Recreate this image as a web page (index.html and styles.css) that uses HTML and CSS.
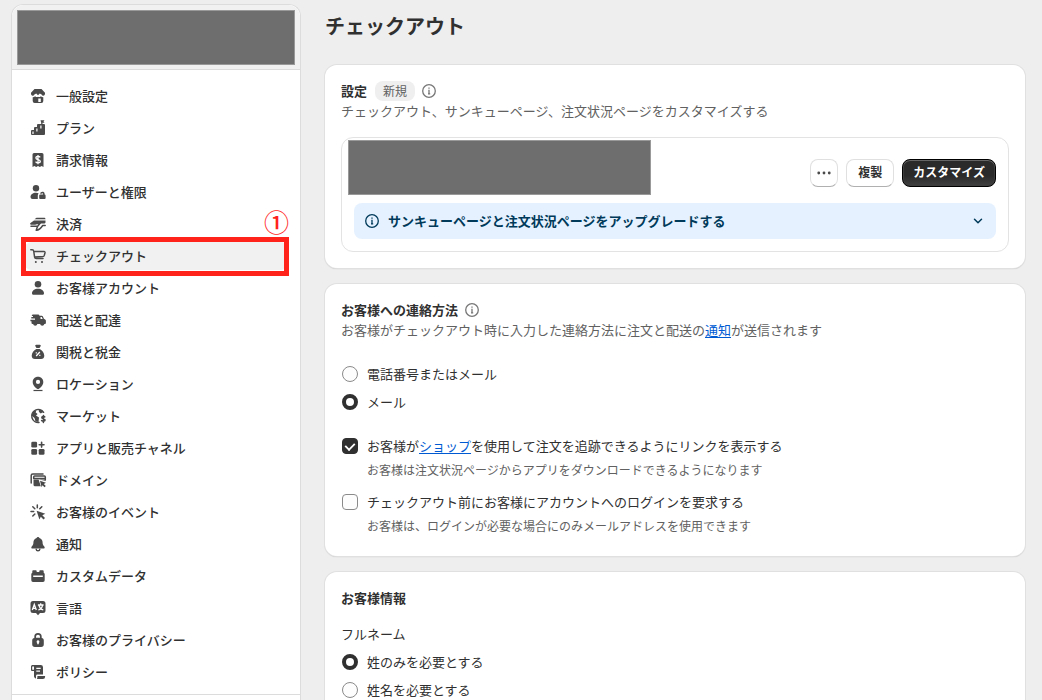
FILE: index.html
```html
<!DOCTYPE html>
<html lang="ja">
<head>
<meta charset="utf-8">
<meta name="viewport" content="width=device-width, initial-scale=1">
<title>チェックアウト</title>
<link rel="stylesheet" href="styles.css">
</head>
<body>
<div class="app">
  <aside class="sidebar">
    <div class="sidebar-head"><div class="redacted store-name"></div></div>
    <nav class="nav" aria-label="設定">
      <a class="nav-item" href="#general"><svg class="icon" viewBox="0 0 20 20"><path d="M6.500 3h7L17 6.800c.3 1.600-.5 2.900-1.700 2.900-.8 0-1.400-.4-1.700-1.200L11.800 7.500 10 9.200 8.200 7.500 6.400 8.500C6.100 9.300 5.500 9.700 4.700 9.700 3.500 9.700 2.700 8.400 3 6.800z"/><path fill-rule="evenodd" d="M4.700 11.200c1 0 1.800-.4 2.400-1 .9.900 2 1.100 2.900.6.900.5 2 .3 2.900-.6.6.6 1.400 1 2.400 1V15a2 2 0 0 1-2 2H6.700a2 2 0 0 1-2-2zM10.300 12.500V16h2.500v-3.500z"/></svg><span>一般設定</span></a>
      <a class="nav-item" href="#plan"><svg class="icon" viewBox="0 0 20 20"><path d="M12.500 2.200h4l-1 1.300 1 1.200h-2V6H16a1 1 0 0 1 1 1v9a1 1 0 0 1-1 1H4a1 1 0 0 1-1-1v-3a1 1 0 0 1 1-1h2v-2a1 1 0 0 1 1-1h2V7a1 1 0 0 1 1-1h3.200V4.700z"/><path class="cut" d="M12.300 7.500h1.200v3h-1.200zM8.300 10.500h1.200v3H8.300zM4.400 13.500h1.200V16H4.400z"/></svg><span>プラン</span></a>
      <a class="nav-item" href="#billing"><svg class="icon" viewBox="0 0 20 20"><path d="M6 3h8a1.500 1.500 0 0 1 1.500 1.500V17l-1.900-1-1.800 1-1.800-1-1.800 1-1.800-1-1.900 1V4.500A1.500 1.500 0 0 1 6 3z"/><path class="cut-line" d="M12.200 7.300c-.5-.8-1.200-1-2.200-1-1.300 0-2.100.6-2.100 1.600 0 2.300 4.400 1 4.400 3.300 0 1-.9 1.600-2.300 1.600-1.100 0-1.900-.4-2.400-1.200M10 5v9.300"/></svg><span>請求情報</span></a>
      <a class="nav-item" href="#users"><svg class="icon" viewBox="0 0 20 20"><circle cx="8" cy="6.300" r="3.200"/><path d="M2.500 15c0-2.500 2.300-4.300 5.500-4.300 1 0 1.900.2 2.700.5-.7.800-.9 1.600-.9 2.800V17H4.500a2 2 0 0 1-2-2z"/><path fill-rule="evenodd" d="M11.200 13.500a1 1 0 0 1 1-1h2.900v-.7c0-.8-1.400-.8-1.600 0h-1.300c0-2.500 4.400-2.700 4.400 0v.8c.7.1 1 .5 1 1.100V16a1 1 0 0 1-1 1h-4.400a1 1 0 0 1-1-1z"/></svg><span>ユーザーと権限</span></a>
      <a class="nav-item" href="#payments"><svg class="icon" viewBox="0 0 20 20"><path d="M8.500 3.800h7.700c.8 0 1.300.6 1.300 1.400H6.500zM6 6.600h11.500v1.700c0 .6-.5 1-1 1.100H9.300L7 10.500H2.500V8.900z"/><path class="line" d="M3 9.700h3.500c2 0 3-.6 5.800-.6l-2.600 3.100H3M9.500 12.500l-1.300 3.700c2.500.2 4.500-1.700 6.500-4.700h2.500"/></svg><span>決済</span></a>
      <a class="nav-item selected" href="#checkout" aria-current="page"><svg class="icon" viewBox="0 0 20 20"><path class="line" d="M2.800 3.700h1.400c.8 0 1.400.5 1.500 1.300l.9 6.200c.1.800.7 1.400 1.600 1.400h6.800M5.900 5.500h10.200c.6 0 1 .6.900 1.200l-.7 2.700c-.2.700-.7 1.100-1.400 1.200l-8.300.5"/><circle cx="7.800" cy="16" r="1"/><circle cx="14" cy="16" r="1"/></svg><span>チェックアウト</span></a>
      <a class="nav-item" href="#accounts"><svg class="icon" viewBox="0 0 20 20"><circle cx="10" cy="6.300" r="3.300"/><path d="M4 15.200c0-2.600 2.600-4.500 6-4.500s6 1.900 6 4.500c0 1-.8 1.600-1.700 1.600H5.700c-.9 0-1.700-.6-1.700-1.600z"/></svg><span>お客様アカウント</span></a>
      <a class="nav-item" href="#shipping"><svg class="icon" viewBox="0 0 20 20"><path fill-rule="evenodd" d="M4.500 4.500H10a1.500 1.500 0 0 1 1.500 1.300h2.200c.6 0 1 .3 1.200.8l1 2.100 1.200.7c.5.300.8.700.8 1.300v2.300a1 1 0 0 1-1 1h-.5a2.200 2.200 0 0 1-4.300 0H9.400a2.200 2.200 0 0 1-4.300 0H4.500a1 1 0 0 1-1-1V11.200H2.400V9.700H7V8.500H3.300V7H5V6H3.600zM12.500 7v2h2.200l-.9-2z"/></svg><span>配送と配達</span></a>
      <a class="nav-item" href="#taxes"><svg class="icon" viewBox="0 0 20 20"><path d="M8.200 2.800h3.600c.9 0 1.200.8.800 1.500L11.500 6h-3L7.400 4.300C7 3.600 7.300 2.800 8.200 2.800zM8.300 7.100h3.400C14.200 8.500 16.300 11 16.300 13.700c0 2-1.300 3.300-3.200 3.300H6.900c-1.900 0-3.200-1.300-3.200-3.300C3.700 11 5.800 8.500 8.300 7.100z"/><path class="cut-line" d="m8.200 14 3.600-4M7.700 10.800h1.200M11.200 13.300h1.200"/></svg><span>関税と税金</span></a>
      <a class="nav-item" href="#locations"><svg class="icon" viewBox="0 0 20 20"><path fill-rule="evenodd" d="M10 2.700c3 0 5.300 2.200 5.300 5.200 0 3.200-2.800 5.600-4.300 6.800-.6.500-1.400.5-2 0-1.500-1.200-4.300-3.600-4.300-6.800 0-3 2.300-5.200 5.300-5.200zM10 5.800a2.100 2.100 0 1 0 0 4.200 2.100 2.100 0 0 0 0-4.200z"/><path d="M5.500 15.900h9v1.200h-9z"/></svg><span>ロケーション</span></a>
      <a class="nav-item" href="#markets"><svg class="icon" viewBox="0 0 20 20"><path class="line" d="M15.600 6.300A6.500 6.500 0 1 0 11 16.400"/><path d="M5 5.500 8.300 4.500 7.700 6.500 9.600 8 8 9.500l3 2-.5 4.500-3-.5-1-3.500-3-2.500zM10.500 3.500c2 .1 3.600 1 4.700 2.600L12.800 7.500 11 6z"/><path class="line" d="M16.800 11c-.6-.9-3-.9-3 .4 0 1.600 3.300 1 3.300 2.700 0 1.400-2.600 1.500-3.500.4M15.400 9.400v7"/></svg><span>マーケット</span></a>
      <a class="nav-item" href="#apps"><svg class="icon" viewBox="0 0 20 20"><rect x="3.300" y="3.700" width="5.800" height="5.800" rx="1.300"/><rect x="3.300" y="11" width="5.800" height="5.800" rx="1.300"/><rect x="10.700" y="11" width="5.800" height="5.800" rx="1.300"/><path class="line thick" d="M13.600 4.300v4.800M11.200 6.700H16"/></svg><span>アプリと販売チャネル</span></a>
      <a class="nav-item" href="#domains"><svg class="icon" viewBox="0 0 20 20"><path class="line" d="M3.200 13V5.600c0-1 .6-1.700 1.600-1.700H15"/><path class="line" d="M17.300 10V7c0-.5-.4-.9-.9-.9H6.600c-.5 0-.9.4-.9.900v1.500h11"/><path d="M5.500 9.500h11.800v1.300L10.600 9.400l2.200 6.900H7a1.500 1.500 0 0 1-1.500-1.500z"/><path d="m12 10.700 6 2-2.200 1.200 2 2-1.300 1.300-2-2-.9 2z"/></svg><span>ドメイン</span></a>
      <a class="nav-item" href="#events"><svg class="icon" viewBox="0 0 20 20"><path d="m8.600 8.700 8.700 3-3 1.500 2.700 2.700-1.500 1.500-2.700-2.700-1.400 2.900z"/><path class="line" d="M9.300 3v2.700M4.800 4.800l2 2M3 9.500h2.700M4.800 14l2-2M13.800 4.800l-2 2"/></svg><span>お客様のイベント</span></a>
      <a class="nav-item" href="#notifications"><svg class="icon" viewBox="0 0 20 20"><path d="M10 3a1.400 1.400 0 0 1 1.400 1.100A4.700 4.700 0 0 1 14.600 8.500c0 2.200.7 2.800 1.700 3.900.8.900.3 2.100-.8 2.100h-11c-1.100 0-1.600-1.200-.8-2.100 1-1.100 1.700-1.700 1.700-3.900a4.700 4.700 0 0 1 3.200-4.400A1.400 1.400 0 0 1 10 3z"/><path class="line" d="M8.200 15.200c.2 2.200 3.400 2.200 3.600 0"/></svg><span>通知</span></a>
      <a class="nav-item" href="#custom"><svg class="icon" viewBox="0 0 20 20"><path fill-rule="evenodd" d="M5.500 4.300h2c.8 0 1.200.5 1.200 1.200V6h2.600v-.5c0-.7.4-1.200 1.200-1.200h2c.8 0 1.200.5 1.200 1.200v1.300l1 1v6.500a1.700 1.700 0 0 1-1.700 1.700H5a1.700 1.700 0 0 1-1.700-1.700V7.800l1-1V5.500c0-.7.4-1.200 1.200-1.200zM5.200 9.500v1.600h9.600V9.500z"/></svg><span>カスタムデータ</span></a>
      <a class="nav-item" href="#languages"><svg class="icon" viewBox="0 0 20 20"><path d="M5 3h10a2.500 2.500 0 0 1 2.500 2.500v7A2.500 2.500 0 0 1 15 15h-3l-2 2.300L8 15H5a2.500 2.500 0 0 1-2.500-2.500v-7A2.500 2.500 0 0 1 5 3z"/><path class="cut-line" d="m4.300 12 2-5.500 2 5.500M5 10.300h2.700M12.700 5.300v1.500M9.900 7h5.700M11 7.300c.5 2.400 2 4 4.300 4.700M14.500 7.300c-.4 2.400-1.900 4-4.200 4.700"/></svg><span>言語</span></a>
      <a class="nav-item" href="#privacy"><svg class="icon" viewBox="0 0 20 20"><path fill-rule="evenodd" d="M6.300 8V6.700a3.700 3.700 0 0 1 7.400 0V8c1.300.3 2.100 1.200 2.100 2.500v3.800a2.700 2.700 0 0 1-2.700 2.700H6.900a2.700 2.700 0 0 1-2.700-2.700v-3.800C4.200 9.200 5 8.300 6.300 8zm1.700-.2h4V6.700a2 2 0 0 0-4 0zM10 10.300a1.500 1.500 0 0 0-.8 2.700v1.300h1.600V13a1.500 1.500 0 0 0-.8-2.700z"/></svg><span>お客様のプライバシー</span></a>
      <a class="nav-item" href="#policy"><svg class="icon" viewBox="0 0 20 20"><path fill-rule="evenodd" d="M4.700 3h8.100A2.200 2.200 0 0 1 15 5.200v7.300H9.500c-1 0-1.500.7-1.500 1.600v2.400c-1.300-.3-2-1.200-2-2.500V9H4a1 1 0 0 1-1-1V4.700C3 3.600 3.700 3 4.700 3zM4.200 5v2.700H6V5c0-1.100-1.800-1.100-1.800 0zM8.300 5.700V7h4.400V5.700zm0 2.700v1.300H12V8.400z"/><path d="M9.400 13.900h7.700v.9a2.200 2.200 0 0 1-2.200 2.200H8.900c.4-.6.500-1.400.5-2.100z"/></svg><span>ポリシー</span></a>
    </nav>
    <div class="callout" aria-hidden="true"><span class="callout-number">①</span></div>
  </aside>

  <main class="main">
    <h1 class="page-title">チェックアウト</h1>

    <section class="card">
      <div class="heading-row">
        <h2 class="card-title">設定</h2>
        <span class="badge">新規</span>
        <svg class="info" viewBox="0 0 16 16"><circle cx="8" cy="8" r="6.300"/><path d="M7.300 7.300H8v3.500M7 10.900h2.200M8 4.400v1.300"/></svg>
      </div>
      <p class="desc">チェックアウト、サンキューページ、注文状況ページをカスタマイズする</p>
      <div class="config">
        <div class="config-top">
          <div class="redacted config-name"></div>
          <div class="actions">
            <button class="btn btn-more" type="button" aria-label="その他の操作"><svg viewBox="0 0 16 16"><circle cx="2" cy="8" r="1.600"/><circle cx="8" cy="8" r="1.600"/><circle cx="14" cy="8" r="1.600"/></svg></button>
            <button class="btn" type="button">複製</button>
            <button class="btn btn-primary" type="button">カスタマイズ</button>
          </div>
        </div>
        <button class="banner" type="button" aria-expanded="false">
          <svg class="info" viewBox="0 0 16 16"><circle cx="8" cy="8" r="6.300"/><path d="M7.300 7.300H8v3.500M7 10.900h2.200M8 4.400v1.300"/></svg>
          <span class="banner-text">サンキューページと注文状況ページをアップグレードする</span>
          <svg class="chevron" viewBox="0 0 12 12"><path d="m2.500 4.300 3.500 3.500 3.500-3.500"/></svg>
        </button>
      </div>
    </section>

    <section class="card">
      <div class="heading-row">
        <h2 class="card-title">お客様への連絡方法</h2>
        <svg class="info" viewBox="0 0 16 16"><circle cx="8" cy="8" r="6.300"/><path d="M7.300 7.300H8v3.500M7 10.900h2.200M8 4.400v1.300"/></svg>
      </div>
      <p class="desc">お客様がチェックアウト時に入力した連絡方法に注文と配送の<a class="link" href="#notifications">通知</a>が送信されます</p>
      <div class="group contact">
        <div class="choice"><input type="radio" name="contact" id="c1"><label for="c1">電話番号またはメール</label></div>
        <div class="choice"><input type="radio" name="contact" id="c2" checked><label for="c2">メール</label></div>
      </div>
      <div class="checks">
        <div>
          <div class="choice"><input type="checkbox" id="k1" checked aria-describedby="h1"><label for="k1">お客様が<a class="link" href="#shop">ショップ</a>を使用して注文を追跡できるようにリンクを表示する</label></div>
          <p class="help" id="h1">お客様は注文状況ページからアプリをダウンロードできるようになります</p>
        </div>
        <div>
          <div class="choice"><input type="checkbox" id="k2" aria-describedby="h2"><label for="k2">チェックアウト前にお客様にアカウントへのログインを要求する</label></div>
          <p class="help" id="h2">お客様は、ログインが必要な場合にのみメールアドレスを使用できます</p>
        </div>
      </div>
    </section>

    <section class="card">
      <h2 class="card-title">お客様情報</h2>
      <fieldset class="group names">
        <legend>フルネーム</legend>
        <div class="choice"><input type="radio" name="fullname" id="n1" checked><label for="n1">姓のみを必要とする</label></div>
        <div class="choice"><input type="radio" name="fullname" id="n2"><label for="n2">姓名を必要とする</label></div>
      </fieldset>
    </section>
  </main>
</div>
</body>
</html>
```
FILE: styles.css
```css
* { box-sizing: border-box; }

body {
  margin: 0;
  background: #eee;
  color: #303030;
  font: 13px/20px "Noto Sans CJK JP", sans-serif;
}

h1, h2, p, fieldset { margin: 0; padding: 0; border: 0; }
legend { padding: 0; }

.app {
  display: flex;
  gap: 24px;
  height: 100vh;
  padding: 4px 17px 0 11px;
  overflow: hidden;
}

.redacted { background: #6e6e6e; border: 1px solid #999; }

/* Sidebar */
.sidebar {
  position: relative;
  flex: 0 0 290px;
  background: #fff;
  border: 1px solid #dcdcdc;
  border-bottom: 0;
  border-radius: 12px 12px 0 0;
}
.sidebar-head {
  padding: 5px 5px 4px;
  border-bottom: 1px solid #dcdcdc;
  border-radius: 12px 12px 0 0;
  background: #f1f1f1;
}
.store-name { height: 55px; }

.nav {
  display: flex;
  flex-direction: column;
  gap: 4px;
  padding: 12px 12px 8px;
  border-bottom: 1px solid #dcdcdc;
}
.nav-item {
  display: flex;
  align-items: center;
  gap: 8px;
  padding: 4px;
  border-radius: 8px;
  color: #303030;
  font-weight: 500;
  text-decoration: none;
}
.nav-item.selected { background: #f1f1f1; }

.icon { width: 20px; height: 20px; fill: #4a4a4a; }
.icon .line { fill: none; stroke: #4a4a4a; stroke-width: 1.5; stroke-linecap: round; stroke-linejoin: round; }
.icon .thick { stroke-width: 1.6; }
.icon .cut { fill: #fff; }
.icon .cut-line { fill: none; stroke: #fff; stroke-width: 1.3; }

/* Numbered marker over the current item */
.callout {
  position: absolute;
  top: 232px;
  left: 9px;
  right: 11px;
  height: 39px;
  border: 5px solid #ff231c;
}
.callout-number {
  position: absolute;
  right: -5px;
  bottom: 38px;
  color: #ff231c;
  font-size: 25px;
  line-height: 24px;
  font-weight: 500;
}

/* Main column */
.main {
  flex: 1;
  min-width: 0;
  display: flex;
  flex-direction: column;
  gap: 16px;
}
.page-title {
  padding: 10px 0 11px;
  font-size: 20px;
  line-height: 24px;
  font-weight: 700;
}
.card {
  flex-shrink: 0;
  padding: 16px 16px 20px;
  border-radius: 12px;
  background: #fff;
  box-shadow: 0 0 0 1px #e0e0e0, 0 1px 1px #bbb;
}
.card:first-of-type { padding-bottom: 16px; }
.heading-row { display: flex; align-items: center; gap: 6px; }
.card-title { font-size: 13px; line-height: 20px; font-weight: 700; }
.badge {
  margin-left: 2px;
  padding: 0 8px;
  border-radius: 8px;
  background: #efefef;
  color: #616161;
  font-size: 12px;
}
.desc, .help { color: #616161; }
.help { margin: 4px 0 0 26px; font-size: 12px; }
.link { color: #005bd3; text-underline-offset: 2px; }

.info {
  flex: none;
  width: 16px;
  height: 16px;
  fill: none;
  stroke: #777;
  stroke-width: 1.3;
}

.config {
  margin-top: 16px;
  padding: 2px 12px 12px 6px;
  border: 1px solid #e3e3e3;
  border-radius: 12px;
}
.config-top { display: flex; justify-content: space-between; gap: 16px; }
.config-name { flex: 0 1 303px; height: 55px; }
.actions { display: flex; align-items: center; gap: 8px; padding-top: 10px; }
.btn {
  height: 28px;
  padding: 0 11px 1px;
  border: 1px solid #e0e0e0;
  border-bottom-color: #b0b0b0;
  border-radius: 8px;
  background: #fff;
  color: #303030;
  font: 700 12px/20px "Noto Sans CJK JP", sans-serif;
}
.btn-more { display: flex; align-items: center; justify-content: center; width: 28px; padding: 0; }
.btn-more svg { width: 14px; height: 14px; fill: #4a4a4a; }
.btn-primary {
  padding: 0 10px 1px;
  border-color: #000;
  background: linear-gradient(#2a2a2a 60%, #404040);
  box-shadow: inset 0 1px 0 #666, inset 0 0 0 1px #3c3c3c;
  color: #fff;
}
.banner {
  display: flex;
  align-items: center;
  gap: 8px;
  width: calc(100% - 6px);
  margin: 8px 0 0 6px;
  padding: 8px 12px 8px 10px;
  border: 0;
  border-radius: 8px;
  background: #e5f1ff;
  color: #003a5a;
  font: 700 13px/20px "Noto Sans CJK JP", sans-serif;
  text-align: left;
}
.banner .info { stroke: #003a5a; }
.banner-text { flex: 1; }
.chevron { width: 12px; height: 12px; fill: none; stroke: #003a5a; stroke-width: 1.5; stroke-linecap: round; stroke-linejoin: round; }

/* Choices */
.group { display: flex; flex-direction: column; gap: 8px; }
.contact { margin-top: 24px; }
.names { margin-top: 16px; }
.names legend { margin-bottom: 8px; }
.checks { display: flex; flex-direction: column; gap: 12px; margin-top: 24px; }
.choice { display: flex; align-items: center; gap: 9px; }
.choice input {
  appearance: none;
  flex: none;
  width: 16px;
  height: 16px;
  margin: 0 0 0 1px;
  border: 1px solid #8a8a8a;
  background: #fdfdfd;
}
.choice input[type="radio"] { border-radius: 50%; }
.choice input[type="radio"]:checked { border: 4px solid #303030; background: #fff; }
.choice input[type="checkbox"] { display: grid; place-items: center; border-radius: 4px; }
.choice input[type="checkbox"]:checked { border-color: #303030; background: #303030; }
.choice input[type="checkbox"]:checked::before {
  content: "";
  width: 8px;
  height: 5px;
  margin-bottom: 2px;
  border: solid #fff;
  border-width: 0 0 2px 2px;
  rotate: -45deg;
  scale: 0.9;
}
```
